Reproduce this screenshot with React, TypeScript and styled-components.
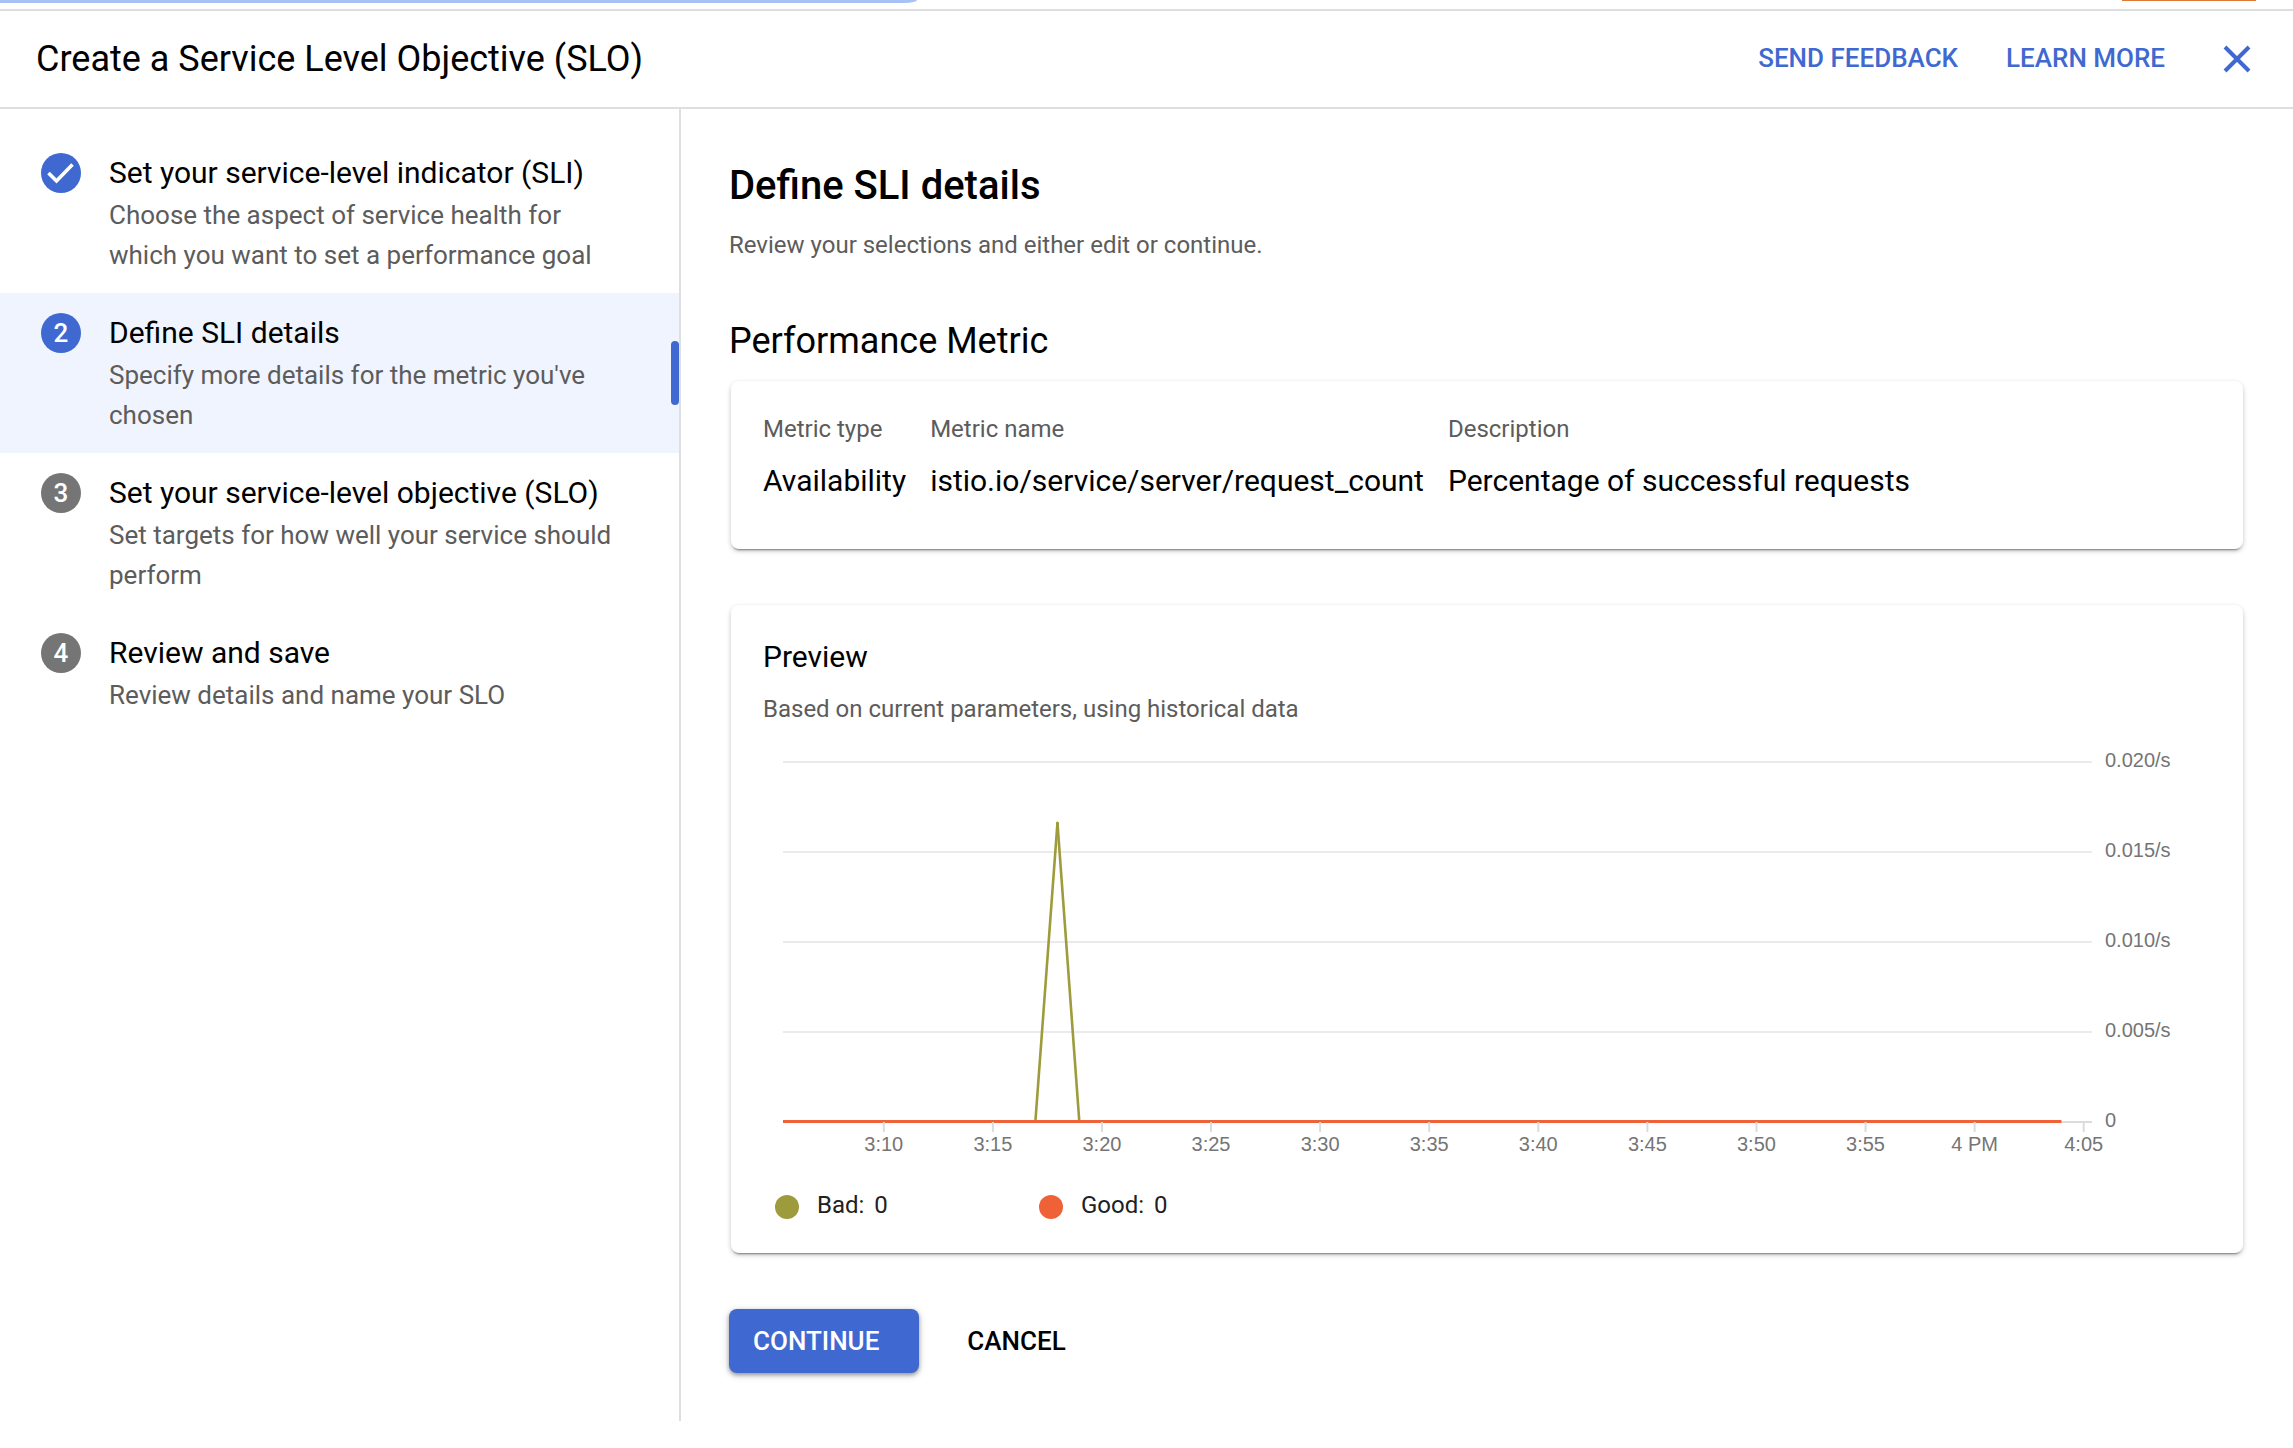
import React from "react";
import styled, { createGlobalStyle, css } from "styled-components";

const BLUE = "#3f69d0";
const RULE = "#dedfe1";
const MUTED = "#5c5c5c";
const OLIVE = "#9d9b3b";
const ORANGE = "#ef6238";

const GlobalStyle = createGlobalStyle`
  *, *::before, *::after { box-sizing: border-box; }
  body {
    margin: 0;
    background: #fff;
    color: #000;
    font-family: Roboto, "Liberation Sans", sans-serif;
  }
  h1, h2, h3, p, ol, ul { margin: 0; padding: 0; font-weight: 400; }
  button { font-family: inherit; border: 0; background: none; padding: 0; cursor: pointer; }
`;

const BrowserEdge = styled.div`
  display: flex;
  justify-content: space-between;
  height: 11px;
  border-bottom: 2px solid ${RULE};
`;

const BlueTab = styled.div`
  width: 40%;
  height: 3px;
  background: #a9c2f6;
  border-bottom-right-radius: 12px 3px;
`;

const OrangeTab = styled.div`
  width: 134px;
  height: 1px;
  margin-right: 37px;
  background: #dd7a35;
`;

const Header = styled.header`
  display: flex;
  align-items: center;
  height: 98px;
  padding: 0 36px;
  border-bottom: 2px solid ${RULE};
`;

const Title = styled.h1`
  flex: 1;
  font-size: 36px;
  line-height: 48px;
`;

const HeaderLinks = styled.div`
  display: flex;
  gap: 48px;
  margin-right: 52px;
  padding-bottom: 2px;
`;

const HeaderLink = styled.a`
  color: ${BLUE};
  font-size: 26px;
  font-weight: 500;
  line-height: 40px;
  text-decoration: none;
`;

const CloseButton = styled.button`
  display: flex;
  padding: 6px;
`;

const Body = styled.div`
  display: flex;
  min-height: 1312px;
  margin-bottom: 27px;
`;

const Sidebar = styled.nav`
  flex: none;
  width: 681px;
  padding-top: 24px;
  border-right: 2px solid ${RULE};
`;

const StepList = styled.ol`
  list-style: none;
`;

const StepItem = styled.li<{ $active?: boolean }>`
  display: flex;
  padding: 20px 0 18px 41px;
  position: relative;
  ${(p) =>
    p.$active &&
    css`
      background: #f0f4fe;
      &::after {
        content: "";
        position: absolute;
        right: 0;
        top: 48px;
        width: 8px;
        height: 64px;
        border-radius: 4px;
        background: ${BLUE};
      }
    `}
`;

const StepBadge = styled.span<{ $on?: boolean }>`
  display: flex;
  flex: none;
  align-items: center;
  justify-content: center;
  width: 40px;
  height: 40px;
  margin-right: 28px;
  border-radius: 50%;
  background: ${(p) => (p.$on ? BLUE : "#757575")};
  color: #fff;
  font-size: 26px;
  font-weight: 500;
  line-height: 40px;
`;

const StepText = styled.div`
  flex: 1;
  padding-right: 60px;
`;

const StepTitle = styled.h2`
  margin-bottom: 2px;
  font-size: 30px;
  line-height: 40px;
`;

const StepInfo = styled.p`
  color: ${MUTED};
  font-size: 26px;
  line-height: 40px;
`;

const Main = styled.main`
  flex: 1;
  min-width: 0;
  padding: 53px 48px 48px;
`;

const PageTitle = styled.h2`
  font-size: 40px;
  font-weight: 500;
  line-height: 48px;
`;

const Hint = styled.p`
  color: ${MUTED};
  font-size: 24px;
  line-height: 32px;
`;

const Intro = styled(Hint)`
  margin: 19px 0 56px;
`;

const SectionTitle = styled.h3`
  margin-bottom: 16px;
  font-size: 36px;
  line-height: 48px;
`;

const Card = styled.section`
  margin: 0 2px 56px;
  padding: 32px;
  border-radius: 8px;
  background: #fff;
  box-shadow: 0 3px 2px -2px rgba(0, 0, 0, 0.4), 0 2px 4px rgba(0, 0, 0, 0.16),
    0 2px 6px rgba(0, 0, 0, 0.08);
`;

const MetricTable = styled.table`
  border-collapse: collapse;
  margin-bottom: 16px;
  text-align: left;
  white-space: nowrap;

  th {
    padding: 0 24px 16px 0;
    color: ${MUTED};
    font-size: 24px;
    font-weight: 400;
    line-height: 32px;
  }
  td {
    padding: 0 24px 0 0;
    font-size: 30px;
    line-height: 40px;
  }
`;

const CardTitle = styled.h3`
  margin-bottom: 16px;
  font-size: 30px;
  line-height: 40px;
`;

const ChartBox = styled.div`
  height: 400px;
  margin: 36px 119px 32px 20px;
`;

const ChartSvg = styled.svg`
  display: block;
  width: 100%;
  height: 100%;
  overflow: visible;

  text {
    fill: #757575;
    font-family: "Liberation Sans", Arial, sans-serif;
    font-size: 20px;
  }
`;

const Legend = styled.ul`
  display: flex;
  padding-left: 12px;
  list-style: none;
`;

const LegendItem = styled.li`
  display: flex;
  width: 264px;
  height: 28px;
  color: #202124;
  font-size: 24px;
  line-height: 24px;
`;

const Dot = styled.span<{ $color: string }>`
  width: 24px;
  height: 24px;
  margin: 2px 18px 0 0;
  border-radius: 50%;
  background: ${(p) => p.$color};
`;

const LegendValue = styled.span`
  margin-left: 10px;
`;

const Actions = styled.div`
  display: flex;
  gap: 48px;
`;

const TextButton = styled.button`
  height: 64px;
  color: #000;
  font-size: 26px;
  font-weight: 500;
`;

const PrimaryButton = styled(TextButton)`
  padding: 0 40px 0 24px;
  border-radius: 8px;
  background: ${BLUE};
  color: #fff;
  box-shadow: 0 2px 4px rgba(0, 0, 0, 0.35), 0 2px 8px rgba(0, 0, 0, 0.15);
`;

type Step = { title: string; info: string; state: "done" | "active" | "todo" };

const steps: Step[] = [
  {
    title: "Set your service-level indicator (SLI)",
    info: "Choose the aspect of service health for which you want to set a performance goal",
    state: "done",
  },
  {
    title: "Define SLI details",
    info: "Specify more details for the metric you've chosen",
    state: "active",
  },
  {
    title: "Set your service-level objective (SLO)",
    info: "Set targets for how well your service should perform",
    state: "todo",
  },
  { title: "Review and save", info: "Review details and name your SLO", state: "todo" },
];

const yTicks = ["0.020/s", "0.015/s", "0.010/s", "0.005/s", "0"];
const xTicks = ["3:10", "3:15", "3:20", "3:25", "3:30", "3:35", "3:40", "3:45", "3:50", "3:55", "4 PM", "4:05"];

const PLOT_HEIGHT = 360;
const MINUTES = 60;

// Minutes after the left edge of the plot, as a share of its width.
const atMinute = (m: number) => `${(m / MINUTES) * 100}%`;
const tickMinute = (i: number) => 4.62 + i * 5;

function CheckIcon() {
  return (
    <svg width="28" height="22" viewBox="0 0 28 22" fill="none" aria-hidden="true">
      <path d="M1.5 11 9.5 19 25.5 2.5" stroke="#fff" strokeWidth="3.6" />
    </svg>
  );
}

function Chart() {
  return (
    <ChartBox>
      <ChartSvg role="img" aria-label="Rate of requests over the past hour">
        {yTicks.map((label, i) => {
          const y = (i * PLOT_HEIGHT) / 4;
          const base = i === yTicks.length - 1;
          return (
            <g key={label}>
              <line x1="0" x2="100%" y1={y + 1} y2={y + 1} stroke={base ? "#dcdcdc" : "#ebebeb"} strokeWidth="2" />
              <text x="100%" dx="13" y={y + 6}>
                {label}
              </text>
            </g>
          );
        })}
        <line x1={atMinute(11.57)} y1={PLOT_HEIGHT} x2={atMinute(12.58)} y2="62" stroke={OLIVE} strokeWidth="2.6" strokeLinecap="round" />
        <line x1={atMinute(12.58)} y1="62" x2={atMinute(13.58)} y2={PLOT_HEIGHT} stroke={OLIVE} strokeWidth="2.6" strokeLinecap="round" />
        <rect x="0" y={PLOT_HEIGHT - 1} width={atMinute(58.6)} height="3" fill={ORANGE} />
        {xTicks.map((label, i) => (
          <g key={label}>
            <line x1={atMinute(tickMinute(i))} x2={atMinute(tickMinute(i))} y1={PLOT_HEIGHT + 1} y2={PLOT_HEIGHT + 11} stroke="#dcdcdc" strokeWidth="2" />
            <text x={atMinute(tickMinute(i))} y={PLOT_HEIGHT + 30} textAnchor="middle">
              {label}
            </text>
          </g>
        ))}
      </ChartSvg>
    </ChartBox>
  );
}

export default function App() {
  return (
    <>
      <GlobalStyle />
      <BrowserEdge>
        <BlueTab />
        <OrangeTab />
      </BrowserEdge>
      <Header>
        <Title>Create a Service Level Objective (SLO)</Title>
        <HeaderLinks>
          <HeaderLink href="#feedback">SEND FEEDBACK</HeaderLink>
          <HeaderLink href="#learn">LEARN MORE</HeaderLink>
        </HeaderLinks>
        <CloseButton type="button" aria-label="Close">
          <svg width="28" height="28" viewBox="0 0 28 28" fill="none" aria-hidden="true">
            <path d="M2 2 26 26M26 2 2 26" stroke={BLUE} strokeWidth="4" />
          </svg>
        </CloseButton>
      </Header>
      <Body>
        <Sidebar aria-label="Steps">
          <StepList>
            {steps.map((step, i) => (
              <StepItem key={step.title} $active={step.state === "active"}>
                <StepBadge $on={step.state !== "todo"}>{step.state === "done" ? <CheckIcon /> : i + 1}</StepBadge>
                <StepText>
                  <StepTitle>{step.title}</StepTitle>
                  <StepInfo>{step.info}</StepInfo>
                </StepText>
              </StepItem>
            ))}
          </StepList>
        </Sidebar>
        <Main>
          <PageTitle>Define SLI details</PageTitle>
          <Intro>Review your selections and either edit or continue.</Intro>
          <SectionTitle>Performance Metric</SectionTitle>
          <Card>
            <MetricTable>
              <thead>
                <tr>
                  <th scope="col">Metric type</th>
                  <th scope="col">Metric name</th>
                  <th scope="col">Description</th>
                </tr>
              </thead>
              <tbody>
                <tr>
                  <td>Availability</td>
                  <td>istio.io/service/server/request_count</td>
                  <td>Percentage of successful requests</td>
                </tr>
              </tbody>
            </MetricTable>
          </Card>
          <Card>
            <CardTitle>Preview</CardTitle>
            <Hint>Based on current parameters, using historical data</Hint>
            <Chart />
            <Legend>
              <LegendItem>
                <Dot $color={OLIVE} />
                Bad:<LegendValue>0</LegendValue>
              </LegendItem>
              <LegendItem>
                <Dot $color={ORANGE} />
                Good:<LegendValue>0</LegendValue>
              </LegendItem>
            </Legend>
          </Card>
          <Actions>
            <PrimaryButton type="button">CONTINUE</PrimaryButton>
            <TextButton type="button">CANCEL</TextButton>
          </Actions>
        </Main>
      </Body>
    </>
  );
}
